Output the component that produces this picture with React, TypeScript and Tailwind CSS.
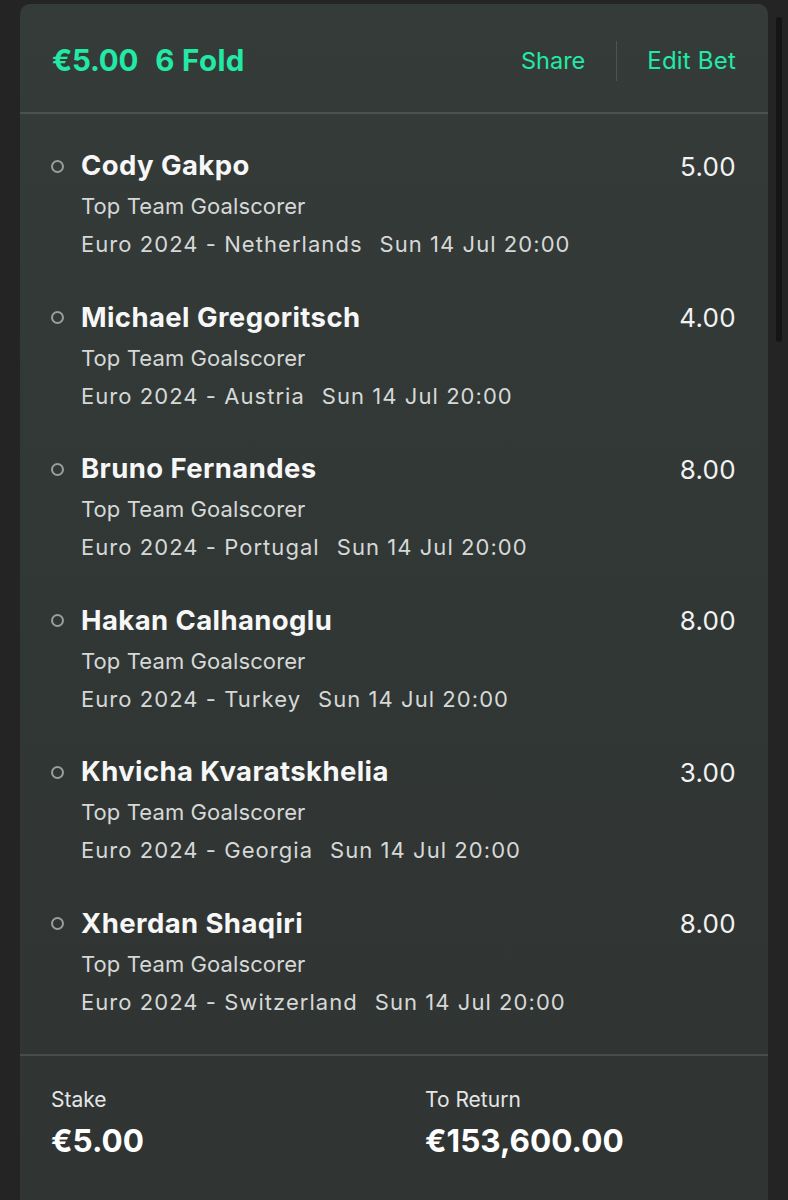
import React from "react";

interface Leg {
  name: string;
  market: string;
  event: string;
  time: string;
  odds: string;
}

const legs: Leg[] = [
  { name: "Cody Gakpo", market: "Top Team Goalscorer", event: "Euro 2024 - Netherlands", time: "Sun 14 Jul 20:00", odds: "5.00" },
  { name: "Michael Gregoritsch", market: "Top Team Goalscorer", event: "Euro 2024 - Austria", time: "Sun 14 Jul 20:00", odds: "4.00" },
  { name: "Bruno Fernandes", market: "Top Team Goalscorer", event: "Euro 2024 - Portugal", time: "Sun 14 Jul 20:00", odds: "8.00" },
  { name: "Hakan Calhanoglu", market: "Top Team Goalscorer", event: "Euro 2024 - Turkey", time: "Sun 14 Jul 20:00", odds: "8.00" },
  { name: "Khvicha Kvaratskhelia", market: "Top Team Goalscorer", event: "Euro 2024 - Georgia", time: "Sun 14 Jul 20:00", odds: "3.00" },
  { name: "Xherdan Shaqiri", market: "Top Team Goalscorer", event: "Euro 2024 - Switzerland", time: "Sun 14 Jul 20:00", odds: "8.00" },
];

function LegRow({ leg }: { leg: Leg }) {
  return (
    <div className="flex pl-[31px] pr-[32px] pb-[36.5px] last:pb-[33px]">
      <div className="w-[30px] h-[36px] flex items-center shrink-0">
        <span className="block w-[13px] h-[13px] rounded-full border-2 border-[#9a9f9d]" />
      </div>
      <div className="flex-1 min-w-0">
        <div className="flex items-center justify-between h-[36px]">
          <span className="text-[27.5px] font-bold text-[#f7f7f7] tracking-[0.4px]">{leg.name}</span>
          <span className="text-[26px] text-[#f2f2f2] tracking-[0.3px]">{leg.odds}</span>
        </div>
        <div className="mt-[3px] leading-[38px] text-[22px] text-[#d6d8d7] tracking-[0.1px]">{leg.market}</div>
        <div className="leading-[38px] text-[22px] text-[#d6d8d7] tracking-[1.05px]">
          {leg.event}
          <span className="ml-[17px]">{leg.time}</span>
        </div>
      </div>
    </div>
  );
}

export default function App() {
  return (
    <div className="relative min-h-[1200px] bg-[#242424] pt-1 px-5 font-['Inter','Noto_Sans',sans-serif]">
      <div className="rounded-t-[10px] bg-gradient-to-b from-[#343b39] via-[#313735] to-[#303433] min-h-[1196px]">
        <div className="h-[110px] pt-[5px] flex items-center justify-between pl-[32px] pr-[32px] border-b-2 border-[#4a5250]">
          <div className="text-[29.5px] font-bold text-[#22eaa6] tracking-[-0.2px]">
            €5.00<span className="ml-[17px] tracking-[0.4px]">6 Fold</span>
          </div>
          <div className="flex items-center text-[24px] text-[#22eaa6]">
            <span className="text-[23.5px]">Share</span>
            <span className="ml-[31px] mr-[30px] block w-px h-10 bg-[#4c5452]" />
            <span className="tracking-[0.2px]">Edit Bet</span>
          </div>
        </div>

        <div className="pt-[34px] border-b-2 border-[#464d4b]">
          {legs.map((leg) => (
            <LegRow key={leg.name} leg={leg} />
          ))}
        </div>

        <div className="grid grid-cols-2 pt-[28px]">
          <div className="pl-[31px]">
            <div className="text-[21px] text-[#e4e6e5] leading-[32px]">Stake</div>
            <div className="mt-[5px] text-[31.5px] font-bold text-white leading-[40px]">€5.00</div>
          </div>
          <div className="pl-[31px]">
            <div className="text-[21px] text-[#e4e6e5] leading-[32px]">To Return</div>
            <div className="mt-[5px] text-[31.5px] font-bold text-white leading-[40px]">€153,600.00</div>
          </div>
        </div>
      </div>

      <div className="absolute top-[17px] right-[6px] w-[6px] h-[325px] rounded-full bg-[#151515]" />
    </div>
  );
}
